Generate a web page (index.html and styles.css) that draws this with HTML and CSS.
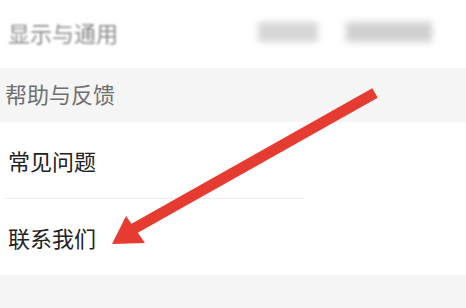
FILE: index.html
```html
<!DOCTYPE html>
<html lang="zh">
<head>
<meta charset="utf-8">
<link rel="stylesheet" href="styles.css">
</head>
<body>
<div class="page">
  <div class="row top">
    <span class="label blurred">显示与通用</span>
    <div class="blobs">
      <span class="blob b1"></span>
      <span class="blob b2"></span>
    </div>
  </div>
  <div class="section">帮助与反馈</div>
  <div class="list">
    <div class="item"><span class="label">常见问题</span></div>
    <div class="divider"></div>
    <div class="item"><span class="label">联系我们</span></div>
  </div>
  <div class="footer"></div>
  <svg class="arrow" width="466" height="308" viewBox="0 0 466 308">
    <line x1="375" y1="93" x2="128" y2="232" stroke="#e53b30" stroke-width="11" stroke-linecap="butt"/>
    <polygon points="112,244 126,216 145,243" fill="#e53b30"/>
  </svg>
</div>
</body>
</html>
```

FILE: styles.css
```css
html, body {
  margin: 0;
  padding: 0;
  background: #ffffff;
}
.page {
  position: relative;
  width: 466px;
  height: 308px;
  overflow: hidden;
  display: flex;
  flex-direction: column;
  font-family: "Noto Sans CJK SC", "Noto Sans", sans-serif;
}
.row.top {
  height: 68px;
  display: flex;
  align-items: center;
  justify-content: space-between;
  padding-left: 8px;
  padding-bottom: 4px;
  box-sizing: border-box;
  background: #fff;
}
.label {
  font-size: 22px;
  line-height: 1;
  color: #222;
}
.blurred {
  color: #8a8a8a;
  filter: blur(1.2px);
}
.blobs {
  display: flex;
  gap: 28px;
  margin-right: 34px;
  filter: blur(3.5px);
}
.blob {
  display: block;
  height: 20px;
  background: #d6d6d6;
}
.b1 { width: 60px; }
.b2 { width: 86px; background: #d0d0d0; }
.section {
  height: 54px;
  background: #f5f5f5;
  display: flex;
  align-items: center;
  padding-left: 5px;
  padding-bottom: 4px;
  box-sizing: border-box;
  font-size: 22px;
  color: #6f6f6f;
}
.list {
  display: flex;
  flex-direction: column;
  background: #fff;
}
.item {
  height: 76px;
  display: flex;
  align-items: center;
  padding-left: 8px;
  box-sizing: border-box;
}
.divider {
  height: 1px;
  width: 300px;
  margin-left: 5px;
  background: #ececec;
}
.footer {
  flex: 1;
  background: #f5f5f5;
}
.arrow {
  position: absolute;
  left: 0;
  top: 0;
  filter: blur(0.5px);
}
```
